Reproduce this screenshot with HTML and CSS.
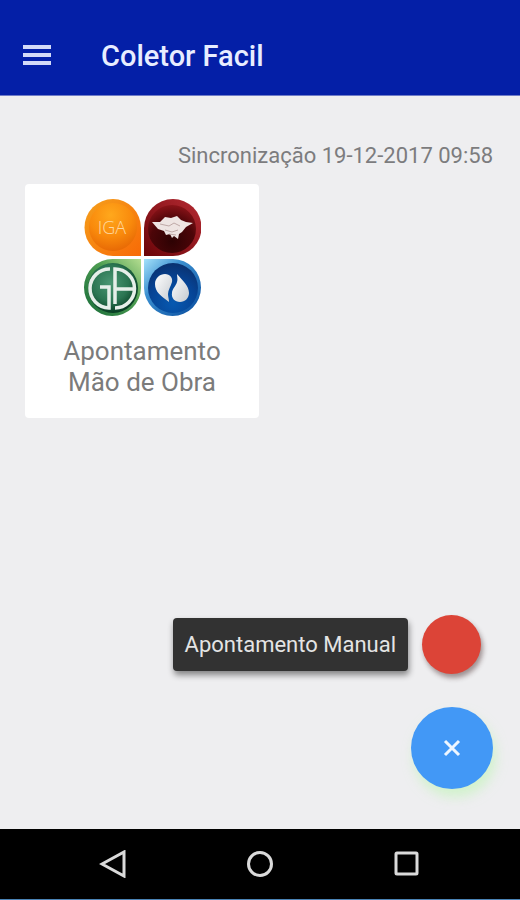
FILE: index.html
```html
<!DOCTYPE html>
<html lang="pt-BR">
<head>
	<title>Coletor Facil</title>
	<meta charset="utf-8">
	<meta name="viewport" content="width=device-width, initial-scale=1">
	<link rel="stylesheet" href="styles.css">
</head>
<body>

<div class="app">

	<!-- header -->
	<header class="header">
		<button type="button" class="btn-menu" aria-label="Menu">
			<svg width="28" height="22" viewBox="0 0 28 22"><path d="M0 3h28M0 11h28M0 19h28" stroke="#d3daf8" stroke-width="4"/></svg>
		</button>
		<h1>Coletor Facil</h1>
	</header>
	<!-- //header -->

	<!-- content -->
	<main class="content">
		<p class="sync">Sincronização 19-12-2017 09:58</p>

		<a href="#" class="card">
			<svg class="card-logo" viewBox="-1 -1 118 118" aria-hidden="true">
				<defs>
					<linearGradient id="orange" x1="0" y1="0" x2="1" y2="1"><stop offset="0" stop-color="#f5a01c"/><stop offset="1" stop-color="#f86a06"/></linearGradient>
					<radialGradient id="orangeBall" cx=".45" cy=".25" r=".75"><stop offset="0" stop-color="#ffa81c"/><stop offset=".6" stop-color="#f98a0c"/><stop offset="1" stop-color="#e86a05"/></radialGradient>
					<linearGradient id="red" x1="1" y1="0" x2="0" y2="1"><stop offset="0" stop-color="#b52a32"/><stop offset="1" stop-color="#6b0509"/></linearGradient>
					<radialGradient id="redBall" cx=".5" cy=".75" r=".75"><stop offset="0" stop-color="#2d0203"/><stop offset=".6" stop-color="#4c0508"/><stop offset="1" stop-color="#8a1318"/></radialGradient>
					<linearGradient id="green" x1="1" y1="0" x2="0" y2="1"><stop offset="0" stop-color="#b4dd90"/><stop offset=".4" stop-color="#4f9e52"/><stop offset="1" stop-color="#166a38"/></linearGradient>
					<radialGradient id="greenBall" cx=".45" cy=".4" r=".6"><stop offset="0" stop-color="#4b9673"/><stop offset=".6" stop-color="#2b7552"/><stop offset="1" stop-color="#073c22"/></radialGradient>
					<linearGradient id="blue" x1="0" y1="0" x2="1" y2="1"><stop offset="0" stop-color="#a5e2fb"/><stop offset=".35" stop-color="#3b8fd0"/><stop offset="1" stop-color="#064a9c"/></linearGradient>
					<radialGradient id="blueBall" cx=".5" cy=".8" r=".8"><stop offset="0" stop-color="#0759b0"/><stop offset=".6" stop-color="#064394"/><stop offset="1" stop-color="#0a316f"/></radialGradient>
					<linearGradient id="silver" x1="0" y1="0" x2="1" y2="1"><stop offset="0" stop-color="#fff"/><stop offset="1" stop-color="#c5cad0"/></linearGradient>
				</defs>
				<!-- IGA -->
				<path d="M29 0A28 29 0 0 1 57 29V57H29A28.500 28.500 0 0 1 29 0Z" fill="url(#orange)"/>
				<circle cx="29" cy="28" r="24" fill="url(#orangeBall)"/>
				<text x="28" y="35" class="logo-text">IGA</text>
				<!-- hands -->
				<path d="M89 0A28.500 28.500 0 0 1 89 57H60V29A29 29 0 0 1 89 0Z" fill="url(#red)"/>
				<circle cx="88" cy="30" r="24" fill="url(#redBall)"/>
				<path d="M68 23l8 0 5-5 6 1 6-2 4 4 5 2 7 1-7 4-4 5-3 2-1 5-4-3-2 2-2-4-4 1-2-4-6-2Z" fill="#eee4e2"/>
				<path d="M76 25l9 2 5-3 6 3M81 31l7 2 6-2M85 35l7 1" fill="none" stroke="#bfa9a7"/>
				<!-- GA -->
				<path d="M57 60V89A28.500 28.500 0 1 1 29 60Z" fill="url(#green)"/>
				<circle cx="29" cy="89" r="25" fill="url(#greenBall)"/>
				<path d="M26 70A19.500 19.500 0 0 0 25 109V88H16M31 105V70A19.500 19.500 0 0 1 31 109M31 90H49" fill="none" stroke="#e6eee9" stroke-width="3.500"/>
				<!-- drops -->
				<path d="M60 60H89A28.500 28.500 0 1 1 60 89Z" fill="url(#blue)"/>
				<circle cx="89" cy="89" r="25" fill="url(#blueBall)"/>
				<path d="M85 103C77 97 71 93 71 85C71 79 76 75 81 75C86 75 89 79 88 83C87 87 84 91 84 95C84 98 85 100 85 103Z" fill="url(#silver)"/>
				<path d="M93 75C99 82 105 87 105 94C105 99 101 103 96 103C91 103 87 99 88 94C88 90 92 87 93 83C94 80 93 78 93 75Z" fill="url(#silver)"/>
			</svg>
			<span class="card-title">Apontamento Mão de Obra</span>
		</a>

		<!-- floating actions -->
		<div class="fab">
			<div class="fab-item">
				<label class="fab-label" for="fab-manual">Apontamento Manual</label>
				<button type="button" class="fab-mini" id="fab-manual"></button>
			</div>
			<button type="button" class="fab-main" aria-label="Fechar">
				<svg width="18" height="18" viewBox="0 0 18 18"><path d="M2 2l14 14M16 2L2 16" stroke="#eef6ff" stroke-width="3"/></svg>
			</button>
		</div>
	</main>
	<!-- //content -->

	<!-- system bar -->
	<nav class="navbar">
		<button type="button" aria-label="Voltar">
			<svg width="28" height="28" viewBox="0 0 28 28"><path d="M25 2V26L3 14Z"/></svg>
		</button>
		<button type="button" aria-label="Início">
			<svg width="28" height="28" viewBox="0 0 28 28"><circle cx="14" cy="14" r="11.500"/></svg>
		</button>
		<button type="button" aria-label="Recentes">
			<svg width="28" height="28" viewBox="0 0 28 28"><rect x="3" y="3" width="21" height="21" rx="1"/></svg>
		</button>
	</nav>

</div>

</body>
</html>
```
FILE: styles.css
```css
* {padding: 0;margin: 0;border: 0;box-sizing: border-box;}
body {font-family: Roboto, "Liberation Sans", sans-serif;background: #eeeef0;}
button {background: none;cursor: pointer;}
svg {display: block;}
a {text-decoration: none;}

.app {display: flex;flex-direction: column;min-height: 100vh;}

.header {
    display: flex;
    align-items: center;
    gap: 48px;
    height: 96px;
    padding: 16px 23px 0;
    background: #041fa7;
    border-bottom: 1px solid #6f7cc8;
}
.header h1 {font-size: 29px;line-height: 32px;font-weight: 500;color: #e8edff;}
.btn-menu {padding: 0 2px 2px 0;}

.content {display: flex;flex-direction: column;flex: 1;padding: 44px 27px 40px 25px;}
.sync {font-size: 22px;line-height: 32px;text-align: right;color: #7c7c7e;}

.card {
    display: flex;
    flex-direction: column;
    align-items: center;
    gap: 20px;
    width: 234px;
    min-height: 234px;
    margin-top: 12px;
    padding: 14px 24px;
    border-radius: 4px;
    background: #fff;
}
.card-logo {width: 118px;height: 118px;}
.card-title {font-size: 26px;line-height: 31px;text-align: center;color: #7b7b7b;}
.logo-text {font-family: "Open Sans", sans-serif;font-size: 18px;font-weight: 300;text-anchor: middle;fill: #ffd9a0;}

.fab {display: flex;flex-direction: column;align-items: flex-end;gap: 33px;margin-top: auto;}
.fab-item {display: flex;align-items: center;gap: 14px;padding-right: 12px;}
.fab-label {
    padding: 10px 12px;
    border-radius: 4px;
    font-size: 22px;
    line-height: 33px;
    color: #e4e4e4;
    background: #323232;
    box-shadow: 1px 4px 6px rgba(0, 0, 0, .45);
}
.fab-mini {width: 59px;height: 59px;border-radius: 50%;background: #dc4437;box-shadow: 2px 4px 5px rgba(60, 30, 30, .45);}
.fab-main {
    display: flex;
    align-items: center;
    justify-content: center;
    width: 82px;
    height: 82px;
    border-radius: 50%;
    background: #4298f6;
    box-shadow: 3px 8px 12px rgba(190, 245, 180, .6);
}

.navbar {
    display: flex;
    height: 71px;
    padding: 0 40px;
    background: #000;
    border-bottom: 1px solid #4a83b5;
}
.navbar button {display: flex;flex: 1;align-items: center;justify-content: center;}
.navbar svg {fill: none;stroke: #dadada;stroke-width: 3;}
```
